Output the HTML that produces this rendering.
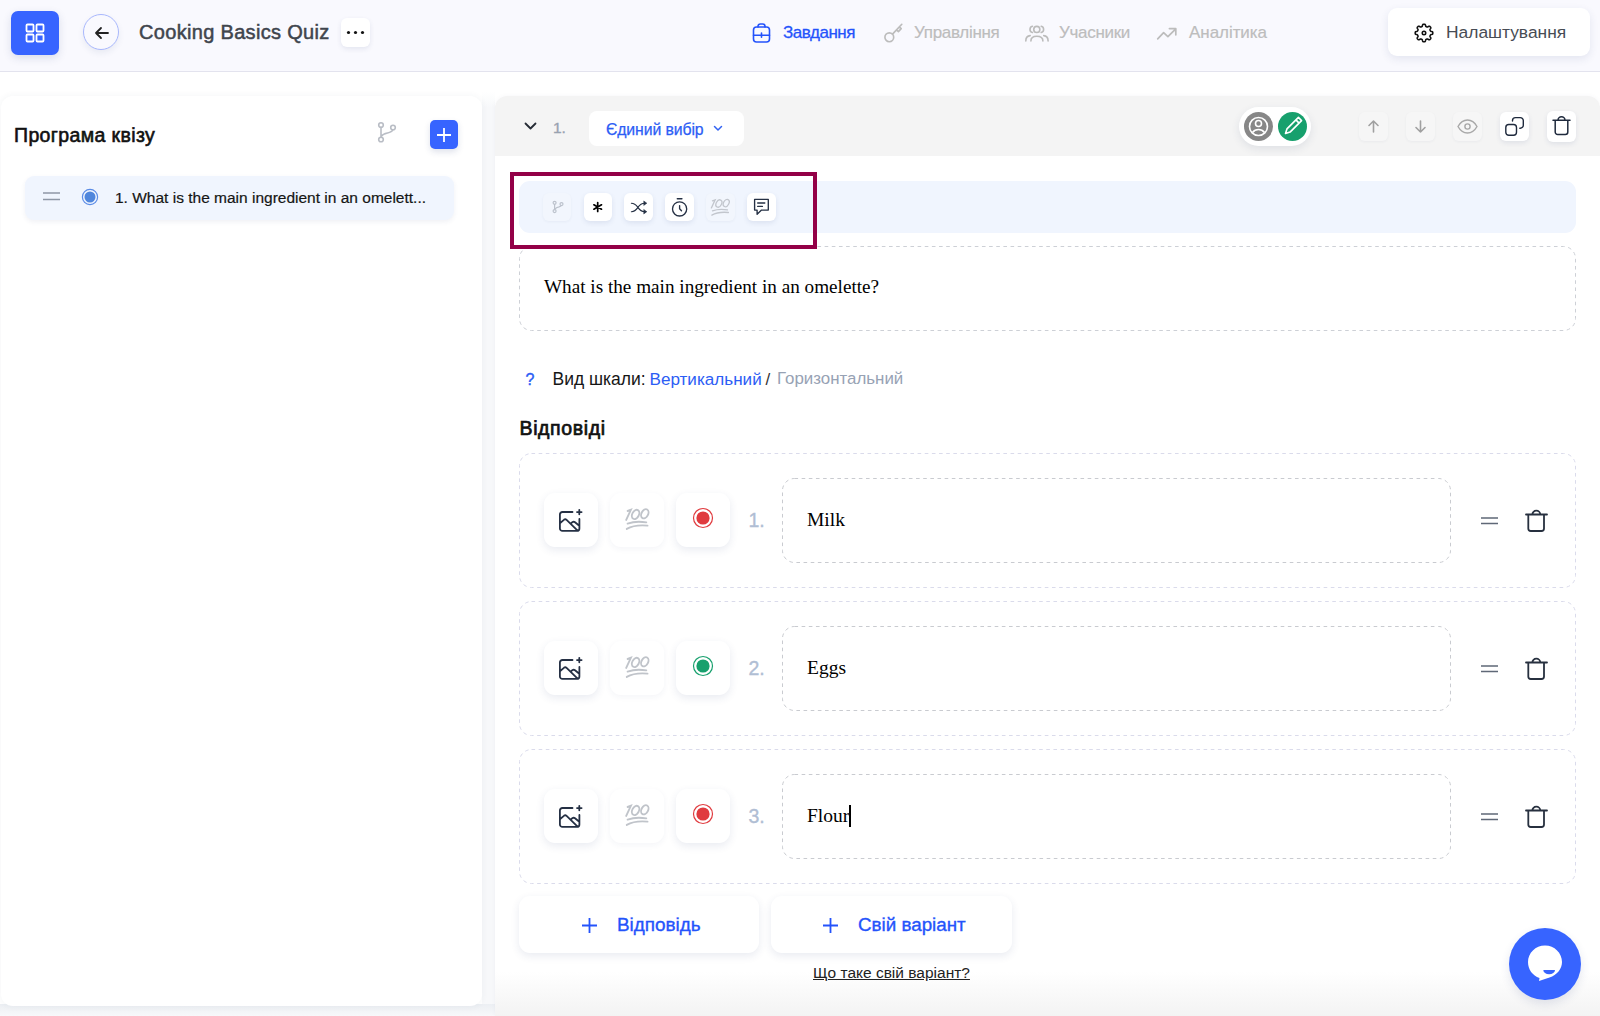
<!DOCTYPE html>
<html><head><meta charset="utf-8">
<style>
*{box-sizing:border-box;margin:0;padding:0}
html,body{width:1600px;height:1016px;overflow:hidden;background:#fff;font-family:"Liberation Sans",sans-serif;position:relative}
.a{position:absolute}
svg{display:block}
.hdr{left:0;top:0;width:1600px;height:72px;background:#f9f9fe;border-bottom:1px solid #e3e3ee}
.t{white-space:nowrap;line-height:1}
.shadowbtn{background:#fff;box-shadow:0 2px 6px rgba(40,60,120,0.10)}
.nav{font-size:16px;color:#bdbdbd}
.iconbtn{background:#fff;border-radius:6px;box-shadow:0 2px 5px rgba(40,60,120,0.10)}
.dash1{border:1px dashed #d2d2d2;border-radius:12px}
.dash2{border:1px dashed #dcdcea;border-radius:12px}
.ansbtn{width:54px;height:54px;border-radius:11px;background:#fff;box-shadow:0 3px 8px rgba(40,60,120,0.10)}
</style></head><body>

<!-- HEADER -->
<div class="a hdr"></div>
<div class="a" style="left:11px;top:11px;width:48px;height:44px;background:#3764ff;border-radius:7px;box-shadow:0 3px 8px rgba(40,60,120,0.15)">
  <svg class="a" style="left:14px;top:12px" width="20" height="20" viewBox="0 0 20 20" fill="none" stroke="#fff" stroke-width="1.8"><rect x="1.5" y="1.5" width="7" height="7" rx="1"/><rect x="11.5" y="1.5" width="7" height="7" rx="1"/><rect x="1.5" y="11.5" width="7" height="7" rx="1"/><rect x="11.5" y="11.5" width="7" height="7" rx="1"/></svg>
</div>
<div class="a" style="left:83px;top:14px;width:36px;height:36px;border-radius:50%;border:1px solid #a9b8fd;background:#f9f9fe;box-shadow:0 3px 6px rgba(40,60,120,0.08)">
  <svg class="a" style="left:9px;top:9px" width="18" height="18" viewBox="0 0 18 18" fill="none" stroke="#222" stroke-width="1.8" stroke-linecap="round" stroke-linejoin="round"><path d="M15 9H3M8 4L3 9l5 5"/></svg>
</div>
<div class="a t" style="left:139px;top:22px;font-size:20px;letter-spacing:0.32px;color:#40454d;-webkit-text-stroke:0.5px #40454d">Cooking Basics Quiz</div>
<div class="a" style="left:341px;top:18px;width:29px;height:29px;border-radius:6px;background:#fff;box-shadow:0 2px 5px rgba(40,60,120,0.10)">
  <svg class="a" style="left:5px;top:12px" width="19" height="5" viewBox="0 0 19 5" fill="#111"><circle cx="2.5" cy="2.5" r="1.6"/><circle cx="9.5" cy="2.5" r="1.6"/><circle cx="16.5" cy="2.5" r="1.6"/></svg>
</div>

<!-- NAV -->
<svg class="a" style="left:752px;top:23px" width="19" height="20" viewBox="0 0 19 20" fill="none" stroke="#2453fb" stroke-width="1.6" stroke-linejoin="round" stroke-linecap="round"><rect x="1.5" y="4" width="16" height="15" rx="3"/><path d="M6 4V3.3A2.3 2.3 0 0 1 8.3 1h2.4A2.3 2.3 0 0 1 13 3.3V4M1.5 12.3h16M9.5 10v4.3"/></svg>
<div class="a t nav" style="left:783px;top:24px;color:#2453fb;font-size:17px;letter-spacing:-0.5px;-webkit-text-stroke:0.3px #2453fb">Завдання</div>
<svg class="a" style="left:880px;top:18px" width="28" height="28" viewBox="0 0 28 28" fill="none" stroke="#bcbcbc" stroke-width="1.65" stroke-linecap="round" stroke-linejoin="round"><circle cx="9.3" cy="19.3" r="4.4"/><path d="M12.5 16.1L21.8 6.3M16.6 11.9L18.4 13.6L21.2 10.6L19.4 8.9"/></svg>
<div class="a t nav" style="left:914px;top:24px;font-size:17px;letter-spacing:-0.3px;-webkit-text-stroke:0.2px #bdbdbd">Управління</div>
<svg class="a" style="left:1020px;top:18px" width="34" height="28" viewBox="0 0 34 28" fill="none" stroke="#bcbcbc" stroke-width="1.6" stroke-linecap="round"><circle cx="16.8" cy="11.4" r="3.05"/><path d="M12.4 8.3A3.2 3.2 0 0 0 12.4 14.5M21.2 8.3A3.2 3.2 0 0 1 21.2 14.5M10.9 22.9C10.9 19.6 13.5 18.2 16.8 18.2C20.1 18.2 22.9 19.6 22.9 22.9M5.8 22.9C5.8 19.8 7.5 17.8 10.2 17.6M28.1 22.9C28.1 19.8 26.4 17.8 23.7 17.6"/></svg>
<div class="a t nav" style="left:1059px;top:24px;font-size:17px;letter-spacing:-0.3px;-webkit-text-stroke:0.2px #bdbdbd">Учасники</div>
<svg class="a" style="left:1150px;top:18px" width="34" height="28" viewBox="0 0 34 28" fill="none" stroke="#bcbcbc" stroke-width="1.7" stroke-linecap="round" stroke-linejoin="round"><path d="M7.7 20.8L13.6 14.7L17.9 18.7L25.8 10.8M19.4 10.6H25.8V16.8"/></svg>
<div class="a t nav" style="left:1189px;top:24px;font-size:17px;letter-spacing:-0.05px;-webkit-text-stroke:0.2px #bdbdbd">Аналітика</div>

<!-- SETTINGS -->
<div class="a" style="left:1388px;top:8px;width:202px;height:48px;border-radius:9px;background:#fff;box-shadow:0 3px 8px rgba(40,60,120,0.10)"></div>
<svg class="a" style="left:1414.4px;top:22.6px" width="20" height="20" viewBox="0 0 20 20" fill="none" stroke="#111" stroke-width="1.55" stroke-linejoin="round"><path d="M10.00 1.20 L10.28 1.21 L10.55 1.24 L10.82 1.30 L11.08 1.43 L11.31 1.72 L11.48 2.24 L11.60 2.85 L11.73 3.26 L11.90 3.47 L12.08 3.60 L12.27 3.69 L12.47 3.77 L12.66 3.85 L12.86 3.93 L13.06 4.00 L13.27 4.04 L13.54 4.01 L13.93 3.81 L14.44 3.47 L14.93 3.22 L15.30 3.17 L15.57 3.26 L15.81 3.41 L16.02 3.59 L16.22 3.78 L16.41 3.98 L16.59 4.19 L16.74 4.43 L16.83 4.70 L16.78 5.07 L16.53 5.56 L16.19 6.07 L15.99 6.46 L15.96 6.73 L16.00 6.94 L16.07 7.14 L16.15 7.34 L16.23 7.53 L16.31 7.73 L16.40 7.92 L16.53 8.10 L16.74 8.27 L17.15 8.40 L17.76 8.52 L18.28 8.69 L18.57 8.92 L18.70 9.18 L18.76 9.45 L18.79 9.72 L18.80 10.00 L18.79 10.28 L18.76 10.55 L18.70 10.82 L18.57 11.08 L18.28 11.31 L17.76 11.48 L17.15 11.60 L16.74 11.73 L16.53 11.90 L16.40 12.08 L16.31 12.27 L16.23 12.47 L16.15 12.66 L16.07 12.86 L16.00 13.06 L15.96 13.27 L15.99 13.54 L16.19 13.93 L16.53 14.44 L16.78 14.93 L16.83 15.30 L16.74 15.57 L16.59 15.81 L16.41 16.02 L16.22 16.22 L16.02 16.41 L15.81 16.59 L15.57 16.74 L15.30 16.83 L14.93 16.78 L14.44 16.53 L13.93 16.19 L13.54 15.99 L13.27 15.96 L13.06 16.00 L12.86 16.07 L12.66 16.15 L12.47 16.23 L12.27 16.31 L12.08 16.40 L11.90 16.53 L11.73 16.74 L11.60 17.15 L11.48 17.76 L11.31 18.28 L11.08 18.57 L10.82 18.70 L10.55 18.76 L10.28 18.79 L10.00 18.80 L9.72 18.79 L9.45 18.76 L9.18 18.70 L8.92 18.57 L8.69 18.28 L8.52 17.76 L8.40 17.15 L8.27 16.74 L8.10 16.53 L7.92 16.40 L7.73 16.31 L7.53 16.23 L7.34 16.15 L7.14 16.07 L6.94 16.00 L6.73 15.96 L6.46 15.99 L6.07 16.19 L5.56 16.53 L5.07 16.78 L4.70 16.83 L4.43 16.74 L4.19 16.59 L3.98 16.41 L3.78 16.22 L3.59 16.02 L3.41 15.81 L3.26 15.57 L3.17 15.30 L3.22 14.93 L3.47 14.44 L3.81 13.93 L4.01 13.54 L4.04 13.27 L4.00 13.06 L3.93 12.86 L3.85 12.66 L3.77 12.47 L3.69 12.27 L3.60 12.08 L3.47 11.90 L3.26 11.73 L2.85 11.60 L2.24 11.48 L1.72 11.31 L1.43 11.08 L1.30 10.82 L1.24 10.55 L1.21 10.28 L1.20 10.00 L1.21 9.72 L1.24 9.45 L1.30 9.18 L1.43 8.92 L1.72 8.69 L2.24 8.52 L2.85 8.40 L3.26 8.27 L3.47 8.10 L3.60 7.92 L3.69 7.73 L3.77 7.53 L3.85 7.34 L3.93 7.14 L4.00 6.94 L4.04 6.73 L4.01 6.46 L3.81 6.07 L3.47 5.56 L3.22 5.07 L3.17 4.70 L3.26 4.43 L3.41 4.19 L3.59 3.98 L3.78 3.78 L3.98 3.59 L4.19 3.41 L4.43 3.26 L4.70 3.17 L5.07 3.22 L5.56 3.47 L6.07 3.81 L6.46 4.01 L6.73 4.04 L6.94 4.00 L7.14 3.93 L7.34 3.85 L7.53 3.77 L7.73 3.69 L7.92 3.60 L8.10 3.47 L8.27 3.26 L8.40 2.85 L8.52 2.24 L8.69 1.72 L8.92 1.43 L9.18 1.30 L9.45 1.24 L9.72 1.21Z"/><circle cx="10" cy="10" r="1.75"/></svg>
<div class="a t" style="left:1446px;top:24px;font-size:17.4px;color:#474c54">Налаштування</div>

<!-- LEFT PANEL -->
<div class="a" style="left:482px;top:92px;width:13px;height:924px;background:linear-gradient(#fff,#f7f8fa 16px)"></div>
<div class="a" style="left:0;top:1004px;width:495px;height:12px;background:linear-gradient(#eceff3,#f7f8fa)"></div>
<div class="a" style="left:1px;top:96px;width:481px;height:910px;background:#fff;border-radius:12px;box-shadow:0 0 6px 1px rgba(40,60,100,0.045)"></div>
<div class="a t" style="left:14px;top:125.5px;font-size:19.5px;letter-spacing:0.38px;color:#111;-webkit-text-stroke:0.6px #111">Програма квізу</div>
<svg class="a" style="left:370px;top:115px" width="34" height="34" viewBox="0 0 34 34" fill="none" stroke="#b9bdc5" stroke-width="1.6" stroke-linecap="round"><circle cx="11" cy="10" r="2.3"/><circle cx="11" cy="24.5" r="2.3"/><circle cx="23" cy="12.5" r="2.3"/><path d="M11 12.3V22.2M11 21.6Q12.8 18.9 17.5 18Q22 17.1 22.9 14.8"/></svg>
<div class="a" style="left:430px;top:120px;width:28px;height:29px;border-radius:5px;background:#3764ff;box-shadow:0 3px 6px rgba(40,60,120,0.15)">
  <svg class="a" style="left:6px;top:6.5px" width="16" height="16" viewBox="0 0 16 16" stroke="#fff" stroke-width="1.8"><path d="M8 1v14M1 8h14"/></svg>
</div>
<div class="a" style="left:25px;top:176px;width:429px;height:44px;border-radius:9px;background:#f0f5fe;box-shadow:0 2px 5px rgba(40,60,120,0.07)"></div>
<svg class="a" style="left:43px;top:191px" width="18" height="10" viewBox="0 0 18 10" stroke="#8e97a6" stroke-width="1.6"><path d="M0 2h17M0 8.5h17"/></svg>
<svg class="a" style="left:81px;top:188px" width="18" height="18" viewBox="0 0 18 18"><circle cx="9" cy="9" r="7.6" fill="none" stroke="#5b8ce6" stroke-width="1.2"/><circle cx="9" cy="9" r="5.5" fill="#4f86dc"/></svg>
<div class="a t" style="left:115px;top:190px;font-size:15.5px;color:#151515;-webkit-text-stroke:0.2px #151515">1. What is the main ingredient in an omelett...</div>

<!-- MAIN PANEL -->
<div class="a" style="left:495px;top:96px;width:1105px;height:920px;background:#fff;border-radius:12px 12px 0 0;box-shadow:0 0 5px rgba(40,60,100,0.04)"></div>
<div class="a" style="left:495px;top:96px;width:1105px;height:60px;background:#f4f4f4;border-radius:12px 12px 0 0"></div>
<div class="a" style="left:495px;top:972px;width:1105px;height:44px;background:linear-gradient(#fff, #f3f3f3)"></div>

<!-- question header row -->
<svg class="a" style="left:524px;top:122px" width="13" height="9" viewBox="0 0 13 9" fill="none" stroke="#262b35" stroke-width="1.8" stroke-linecap="round" stroke-linejoin="round"><path d="M1.5 1.5l5 5 5-5"/></svg>
<div class="a t" style="left:553px;top:120px;font-size:15.5px;color:#98a2b0;-webkit-text-stroke:0.35px #98a2b0">1.</div>
<div class="a" style="left:589px;top:111px;width:155px;height:35px;border-radius:8px;background:#fff"></div>
<div class="a t" style="left:606px;top:122px;font-size:15.8px;letter-spacing:-0.1px;color:#2c5df5;-webkit-text-stroke:0.25px #2c5df5">Єдиний вибір</div>
<svg class="a" style="left:713px;top:125px" width="10" height="7" viewBox="0 0 10 7" fill="none" stroke="#3263f2" stroke-width="1.5" stroke-linecap="round" stroke-linejoin="round"><path d="M1.5 1.5L5 5l3.5-3.5"/></svg>

<div class="a" style="left:1239px;top:107px;width:72px;height:39px;border-radius:20px;background:#fff;box-shadow:0 3px 8px rgba(40,60,100,0.10)"></div>
<svg class="a" style="left:1244px;top:112px" width="29" height="29" viewBox="0 0 29 29"><circle cx="14.5" cy="14.5" r="14.5" fill="#878787"/><g fill="none" stroke="#fff" stroke-width="1.6"><circle cx="14.5" cy="14.5" r="9"/><circle cx="14.5" cy="11.5" r="3"/><path d="M8.5 20.5c1.5-2 3.5-3 6-3s4.5 1 6 3"/></g></svg>
<svg class="a" style="left:1278px;top:112px" width="29" height="29" viewBox="0 0 29 29"><circle cx="14.5" cy="14.5" r="14.5" fill="#17a06d"/><g fill="none" stroke="#fff" stroke-width="1.6" stroke-linejoin="round"><path d="M20.44 5.44L23.56 8.56L12.06 20.06L7.5 21.5L8.94 16.94Z M17.94 7.94L21.06 11.06"/></g></svg>

<div class="a" style="left:1359px;top:112px;width:29px;height:29px;border-radius:6px;background:#f6f6f6;box-shadow:0 1px 3px rgba(40,60,100,0.05)"></div>
<svg class="a" style="left:1366px;top:119px" width="15" height="15" viewBox="0 0 15 15" fill="none" stroke="#a0a0a0" stroke-width="1.6" stroke-linecap="round" stroke-linejoin="round"><path d="M7.5 13V2M3 6.5l4.5-4.5 4.5 4.5"/></svg>
<div class="a" style="left:1406px;top:112px;width:29px;height:29px;border-radius:6px;background:#f6f6f6;box-shadow:0 1px 3px rgba(40,60,100,0.05)"></div>
<svg class="a" style="left:1413px;top:119px" width="15" height="15" viewBox="0 0 15 15" fill="none" stroke="#a0a0a0" stroke-width="1.6" stroke-linecap="round" stroke-linejoin="round"><path d="M7.5 2v11M3 8.5l4.5 4.5 4.5-4.5"/></svg>
<div class="a" style="left:1453px;top:112px;width:29px;height:29px;border-radius:6px;background:#f6f6f6;box-shadow:0 1px 3px rgba(40,60,100,0.05)"></div>
<svg class="a" style="left:1457px;top:119px" width="21" height="15" viewBox="0 0 21 15" fill="none" stroke="#a8a8a8" stroke-width="1.4"><path d="M1 7.5C3.5 3 7 1 10.5 1S17.5 3 20 7.5C17.5 12 14 14 10.5 14S3.5 12 1 7.5z"/><circle cx="10.5" cy="7.5" r="2.6"/></svg>
<div class="a iconbtn" style="left:1500px;top:112px;width:29px;height:29px"></div>
<svg class="a" style="left:1505px;top:116px" width="20" height="20" viewBox="0 0 20 20" fill="none" stroke="#1f2a3d" stroke-width="1.4" stroke-linecap="round" stroke-linejoin="round"><rect x="0.8" y="8.5" width="10.7" height="10.8" rx="3"/><path d="M7.5 5V4.6A3 3 0 0 1 10.5 1.6H15.3A3 3 0 0 1 18.3 4.6V9.2A3 3 0 0 1 15.3 12.2H14.8"/></svg>
<div class="a iconbtn" style="left:1547px;top:111px;width:29px;height:31px"></div>
<svg class="a" style="left:1552px;top:115px" width="19" height="21" viewBox="0 0 19 21" fill="none" stroke="#1f2a3d" stroke-width="1.5" stroke-linecap="round" stroke-linejoin="round"><path d="M1 5.3H18M6 5.3a3.5 3.5 0 0 1 7 0M3.2 5.3V17a2.5 2.5 0 0 0 2.5 2.5h7.6a2.5 2.5 0 0 0 2.5-2.5V5.3"/></svg>

<!-- toolbar -->
<div class="a" style="left:519px;top:181px;width:1057px;height:52px;border-radius:11px;background:#f0f5fe"></div>
<div class="a" style="left:543px;top:193px;width:28px;height:28px;border-radius:6px;background:#f2f6fd;box-shadow:0 1px 3px rgba(40,60,100,0.05)"></div>
<svg class="a" style="left:545px;top:194px" width="28" height="28" viewBox="0 0 28 28" fill="none" stroke="#bcc2cc" stroke-width="1.2" stroke-linecap="round"><circle cx="9.6" cy="8.8" r="1.5"/><circle cx="9.6" cy="17.1" r="1.5"/><circle cx="16.5" cy="10.05" r="1.5"/><path d="M9.6 10.3V15.6M9.8 15.4Q11 13.4 14 12.9Q15.8 12.5 16.1 11.5"/></svg>
<div class="a iconbtn" style="left:584px;top:193px;width:28px;height:28px"></div>
<svg class="a" style="left:585px;top:194px" width="28" height="28" viewBox="0 0 28 28" fill="none" stroke="#000" stroke-width="1.7" stroke-linecap="round"><path d="M12.7 8.6V17.4M8.9 10.8L16.5 15.2M8.9 15.2L16.5 10.8"/></svg>
<div class="a iconbtn" style="left:624px;top:193px;width:29px;height:28px"></div>
<svg class="a" style="left:585px;top:194px" width="70" height="28" viewBox="0 0 70 28" fill="none" stroke="#253044" stroke-width="1.15" stroke-linecap="round"><path d="M46.4 9.2C50 9.2 51.5 11.5 52.9 13.4C54.5 15.8 56.5 17.7 59.6 17.7M46.4 17.7C50 17.7 51.5 15.5 52.9 13.4C54.5 11 56.5 9.2 59.6 9.2"/><path d="M59 7.2L61.8 9.2L59 11.2Z M59 15.7L61.8 17.7L59 19.7Z" fill="#253044" stroke-width="0.6" stroke-linejoin="round"/></svg>
<div class="a iconbtn" style="left:665px;top:193px;width:29px;height:28px"></div>
<svg class="a" style="left:666px;top:194px" width="28" height="28" viewBox="0 0 28 28" fill="none" stroke="#253044" stroke-width="1.35" stroke-linecap="round" stroke-linejoin="round"><circle cx="13.6" cy="14.9" r="7.1"/><path d="M13.6 11.6V14.7L15.5 16.8"/><path d="M11.3 4.8H15.9" stroke-width="1.4"/></svg>
<div class="a" style="left:706px;top:193px;width:29px;height:28px;border-radius:6px;background:#f2f6fd;box-shadow:0 1px 3px rgba(40,60,100,0.05)"></div>
<svg class="a" style="left:704.1px;top:192.1px" width="32" height="27.2" viewBox="0 0 40 34" fill="none" stroke="#c2c6cd" stroke-width="1.65" stroke-linecap="round"><path d="M9.2 19.9L13.9 9.8L10.6 11"/><ellipse cx="18.6" cy="14.4" rx="3.3" ry="4.9" transform="rotate(28 18.6 14.4)"/><ellipse cx="27.8" cy="13.8" rx="3.3" ry="4.9" transform="rotate(28 27.8 13.8)"/><path d="M10.6 23.6Q19 20.6 29.3 22.4M9.8 28.9Q17.5 24.4 30.5 25.6"/></svg>
<div class="a iconbtn" style="left:747px;top:193px;width:29px;height:28px"></div>
<svg class="a" style="left:745px;top:194px" width="34" height="28" viewBox="0 0 34 28" fill="none" stroke="#253044" stroke-width="1.35" stroke-linecap="round" stroke-linejoin="round"><path d="M9.6 5.4H23.3V16.1H16.5L12.1 20.3V16.1H9.6Z"/><path d="M12.7 9H19.8M12.7 12.4H17.4"/></svg>

<!-- question text box -->
<svg class="a" style="left:519px;top:246px" width="1057" height="85"><rect x="0.5" y="0.5" width="1056" height="84" rx="12" fill="none" stroke="#cdd0d6" stroke-width="1" stroke-dasharray="3.6 3.55"/></svg>
<div class="a t" style="left:544px;top:277px;font-size:19.2px;font-family:'Liberation Serif',serif;color:#000">What is the main ingredient in an omelette?</div>

<!-- red highlight box -->
<div class="a" style="left:509.5px;top:172px;width:307.5px;height:77px;border:4px solid #930047"></div>

<!-- scale row -->
<div class="a t" style="left:525.5px;top:372px;font-size:16px;color:#2c5df5;-webkit-text-stroke:0.4px #2c5df5">?</div>
<div class="a t" style="left:552.5px;top:370.5px;font-size:17.5px;color:#161616">Вид шкали:</div>
<div class="a t" style="left:649.5px;top:371px;font-size:17.1px;color:#2c5df5">Вертикальний</div>
<div class="a t" style="left:765.5px;top:371px;font-size:17px;color:#333">/</div>
<div class="a t" style="left:777px;top:371px;font-size:16.9px;color:#97a2b4">Горизонтальний</div>

<div class="a t" style="left:519.5px;top:418.5px;font-size:19.5px;letter-spacing:0.62px;color:#111;-webkit-text-stroke:0.7px #111">Відповіді</div>

<!-- answer 1 -->
<svg class="a" style="left:519px;top:453px" width="1057" height="135"><rect x="0.5" y="0.5" width="1056" height="134" rx="12" fill="none" stroke="#dadbeb" stroke-width="1" stroke-dasharray="3.6 3.55"/></svg>
<div class="a ansbtn" style="left:544px;top:493px"></div>
<svg class="a" style="left:552px;top:500px" width="34" height="34" viewBox="0 0 34 34" fill="none" stroke="#253044" stroke-width="1.8" stroke-linecap="round" stroke-linejoin="round"><path d="M20.5 12H10.4A2.5 2.5 0 0 0 7.9 14.5V28.4A2.5 2.5 0 0 0 10.4 30.9H24.9A2.5 2.5 0 0 0 27.4 28.4V18.9M7.9 23.2L12.2 19.6Q13.4 18.8 14.6 19.9L25.6 30.6M18.9 23.4L20.6 22Q21.8 21.3 23 22.3L27.3 25.8M27.3 9.8V14.3M25 12.05H29.6"/></svg>
<div class="a ansbtn" style="left:610px;top:493px;box-shadow:0 2px 6px rgba(40,60,120,0.05)"></div>
<svg class="a" style="left:617px;top:500px" width="40" height="34" viewBox="0 0 40 34" fill="none" stroke="#c0c4ca" stroke-width="1.9" stroke-linecap="round"><path d="M9.2 19.9L13.9 9.8L10.6 11"/><ellipse cx="18.6" cy="14.4" rx="3.3" ry="4.9" transform="rotate(28 18.6 14.4)"/><ellipse cx="27.8" cy="13.8" rx="3.3" ry="4.9" transform="rotate(28 27.8 13.8)"/><path d="M10.6 23.6Q19 20.6 29.3 22.4M9.8 28.9Q17.5 24.4 30.5 25.6"/></svg>
<div class="a ansbtn" style="left:676px;top:493px"></div>
<svg class="a" style="left:692px;top:507px" width="22" height="22" viewBox="0 0 22 22"><circle cx="11" cy="11" r="9.5" fill="none" stroke="#e03b3f" stroke-width="1.2"/><circle cx="11" cy="11" r="6.6" fill="#e03b3f"/></svg>
<div class="a t" style="left:748.5px;top:511px;font-size:19.5px;color:#b0bed4;-webkit-text-stroke:0.35px #b0bed4">1.</div>
<svg class="a" style="left:782px;top:478px" width="669" height="85"><rect x="0.5" y="0.5" width="668" height="84" rx="12" fill="none" stroke="#c9cbd0" stroke-width="1" stroke-dasharray="3.6 3.55"/></svg>
<div class="a t" style="left:807px;top:510px;font-size:19.5px;font-family:'Liberation Serif',serif;color:#000">Milk</div>
<svg class="a" style="left:1481px;top:517px" width="17" height="8" viewBox="0 0 17 8" stroke="#5f6877" stroke-width="1.6"><path d="M0 1h17M0 6.5h17"/></svg>
<svg class="a" style="left:1525px;top:508px" width="23" height="24" viewBox="0 0 23 23" fill="none" stroke="#27303f" stroke-width="1.8" stroke-linecap="round" stroke-linejoin="round"><path d="M1 6H22M7.3 6a4 3.8 0 0 1 8 0M3.3 6V20a2.5 2.5 0 0 0 2.5 2.5h10.7a2.5 2.5 0 0 0 2.5-2.5V6"/></svg>

<!-- answer 2 -->
<svg class="a" style="left:519px;top:601px" width="1057" height="135"><rect x="0.5" y="0.5" width="1056" height="134" rx="12" fill="none" stroke="#dadbeb" stroke-width="1" stroke-dasharray="3.6 3.55"/></svg>
<div class="a ansbtn" style="left:544px;top:641px"></div>
<svg class="a" style="left:552px;top:648px" width="34" height="34" viewBox="0 0 34 34" fill="none" stroke="#253044" stroke-width="1.8" stroke-linecap="round" stroke-linejoin="round"><path d="M20.5 12H10.4A2.5 2.5 0 0 0 7.9 14.5V28.4A2.5 2.5 0 0 0 10.4 30.9H24.9A2.5 2.5 0 0 0 27.4 28.4V18.9M7.9 23.2L12.2 19.6Q13.4 18.8 14.6 19.9L25.6 30.6M18.9 23.4L20.6 22Q21.8 21.3 23 22.3L27.3 25.8M27.3 9.8V14.3M25 12.05H29.6"/></svg>
<div class="a ansbtn" style="left:610px;top:641px;box-shadow:0 2px 6px rgba(40,60,120,0.05)"></div>
<svg class="a" style="left:617px;top:648px" width="40" height="34" viewBox="0 0 40 34" fill="none" stroke="#c0c4ca" stroke-width="1.9" stroke-linecap="round"><path d="M9.2 19.9L13.9 9.8L10.6 11"/><ellipse cx="18.6" cy="14.4" rx="3.3" ry="4.9" transform="rotate(28 18.6 14.4)"/><ellipse cx="27.8" cy="13.8" rx="3.3" ry="4.9" transform="rotate(28 27.8 13.8)"/><path d="M10.6 23.6Q19 20.6 29.3 22.4M9.8 28.9Q17.5 24.4 30.5 25.6"/></svg>
<div class="a ansbtn" style="left:676px;top:641px"></div>
<svg class="a" style="left:692px;top:655px" width="22" height="22" viewBox="0 0 22 22"><circle cx="11" cy="11" r="9.5" fill="none" stroke="#17a06d" stroke-width="1.2"/><circle cx="11" cy="11" r="6.6" fill="#17a06d"/></svg>
<div class="a t" style="left:748.5px;top:659px;font-size:19.5px;color:#b0bed4;-webkit-text-stroke:0.35px #b0bed4">2.</div>
<svg class="a" style="left:782px;top:626px" width="669" height="85"><rect x="0.5" y="0.5" width="668" height="84" rx="12" fill="none" stroke="#c9cbd0" stroke-width="1" stroke-dasharray="3.6 3.55"/></svg>
<div class="a t" style="left:807px;top:658px;font-size:19.5px;font-family:'Liberation Serif',serif;color:#000">Eggs</div>
<svg class="a" style="left:1481px;top:665px" width="17" height="8" viewBox="0 0 17 8" stroke="#5f6877" stroke-width="1.6"><path d="M0 1h17M0 6.5h17"/></svg>
<svg class="a" style="left:1525px;top:656px" width="23" height="24" viewBox="0 0 23 23" fill="none" stroke="#27303f" stroke-width="1.8" stroke-linecap="round" stroke-linejoin="round"><path d="M1 6H22M7.3 6a4 3.8 0 0 1 8 0M3.3 6V20a2.5 2.5 0 0 0 2.5 2.5h10.7a2.5 2.5 0 0 0 2.5-2.5V6"/></svg>

<!-- answer 3 -->
<svg class="a" style="left:519px;top:749px" width="1057" height="135"><rect x="0.5" y="0.5" width="1056" height="134" rx="12" fill="none" stroke="#dadbeb" stroke-width="1" stroke-dasharray="3.6 3.55"/></svg>
<div class="a ansbtn" style="left:544px;top:789px"></div>
<svg class="a" style="left:552px;top:796px" width="34" height="34" viewBox="0 0 34 34" fill="none" stroke="#253044" stroke-width="1.8" stroke-linecap="round" stroke-linejoin="round"><path d="M20.5 12H10.4A2.5 2.5 0 0 0 7.9 14.5V28.4A2.5 2.5 0 0 0 10.4 30.9H24.9A2.5 2.5 0 0 0 27.4 28.4V18.9M7.9 23.2L12.2 19.6Q13.4 18.8 14.6 19.9L25.6 30.6M18.9 23.4L20.6 22Q21.8 21.3 23 22.3L27.3 25.8M27.3 9.8V14.3M25 12.05H29.6"/></svg>
<div class="a ansbtn" style="left:610px;top:789px;box-shadow:0 2px 6px rgba(40,60,120,0.05)"></div>
<svg class="a" style="left:617px;top:796px" width="40" height="34" viewBox="0 0 40 34" fill="none" stroke="#c0c4ca" stroke-width="1.9" stroke-linecap="round"><path d="M9.2 19.9L13.9 9.8L10.6 11"/><ellipse cx="18.6" cy="14.4" rx="3.3" ry="4.9" transform="rotate(28 18.6 14.4)"/><ellipse cx="27.8" cy="13.8" rx="3.3" ry="4.9" transform="rotate(28 27.8 13.8)"/><path d="M10.6 23.6Q19 20.6 29.3 22.4M9.8 28.9Q17.5 24.4 30.5 25.6"/></svg>
<div class="a ansbtn" style="left:676px;top:789px"></div>
<svg class="a" style="left:692px;top:803px" width="22" height="22" viewBox="0 0 22 22"><circle cx="11" cy="11" r="9.5" fill="none" stroke="#e03b3f" stroke-width="1.2"/><circle cx="11" cy="11" r="6.6" fill="#e03b3f"/></svg>
<div class="a t" style="left:748.5px;top:807px;font-size:19.5px;color:#b0bed4;-webkit-text-stroke:0.35px #b0bed4">3.</div>
<svg class="a" style="left:782px;top:774px" width="669" height="85"><rect x="0.5" y="0.5" width="668" height="84" rx="12" fill="none" stroke="#c9cbd0" stroke-width="1" stroke-dasharray="3.6 3.55"/></svg>
<div class="a t" style="left:807px;top:806px;font-size:19.5px;font-family:'Liberation Serif',serif;color:#000">Flour</div>
<svg class="a" style="left:1481px;top:813px" width="17" height="8" viewBox="0 0 17 8" stroke="#5f6877" stroke-width="1.6"><path d="M0 1h17M0 6.5h17"/></svg>
<svg class="a" style="left:1525px;top:804px" width="23" height="24" viewBox="0 0 23 23" fill="none" stroke="#27303f" stroke-width="1.8" stroke-linecap="round" stroke-linejoin="round"><path d="M1 6H22M7.3 6a4 3.8 0 0 1 8 0M3.3 6V20a2.5 2.5 0 0 0 2.5 2.5h10.7a2.5 2.5 0 0 0 2.5-2.5V6"/></svg>

<div class="a" style="left:849px;top:805px;width:2px;height:22px;background:#000"></div>

<!-- bottom buttons -->
<div class="a" style="left:519px;top:896px;width:240px;height:57px;border-radius:11px;background:#fff;box-shadow:0 3px 8px rgba(40,60,120,0.10)"></div>
<svg class="a" style="left:582px;top:918px" width="15" height="15" viewBox="0 0 15 15" stroke="#2453fb" stroke-width="1.8"><path d="M7.5 0v15M0 7.5h15"/></svg>
<div class="a t" style="left:617px;top:916px;font-size:18.9px;color:#2453fb;-webkit-text-stroke:0.35px #2453fb">Відповідь</div>
<div class="a" style="left:771px;top:896px;width:241px;height:57px;border-radius:11px;background:#fff;box-shadow:0 3px 8px rgba(40,60,120,0.10)"></div>
<svg class="a" style="left:823px;top:918px" width="15" height="15" viewBox="0 0 15 15" stroke="#2453fb" stroke-width="1.8"><path d="M7.5 0v15M0 7.5h15"/></svg>
<div class="a t" style="left:858px;top:916px;font-size:18.8px;color:#2453fb;-webkit-text-stroke:0.35px #2453fb">Свій варіант</div>
<div class="a t" style="left:813px;top:965px;font-size:15.5px;color:#222;text-decoration:underline">Що таке свій варіант?</div>

<!-- chat bubble -->
<div class="a" style="left:1509px;top:928px;width:72px;height:72px;border-radius:50%;background:#3764ff;box-shadow:0 4px 10px rgba(40,60,120,0.12)"></div>
<svg class="a" style="left:1509px;top:928px" width="72" height="72" viewBox="0 0 72 72"><path d="M36 17.5c9.5 0 17 7.5 17 16.5 0 7-5 13-12.5 15.5L30 53l.5-3C23.5 47.5 19 41.5 19 34c0-9 7.5-16.5 17-16.5z" fill="#fff"/><path d="M34.3 42H46A5.85 4.3 0 0 1 34.3 42Z" fill="#3764ff"/></svg>

</body></html>
